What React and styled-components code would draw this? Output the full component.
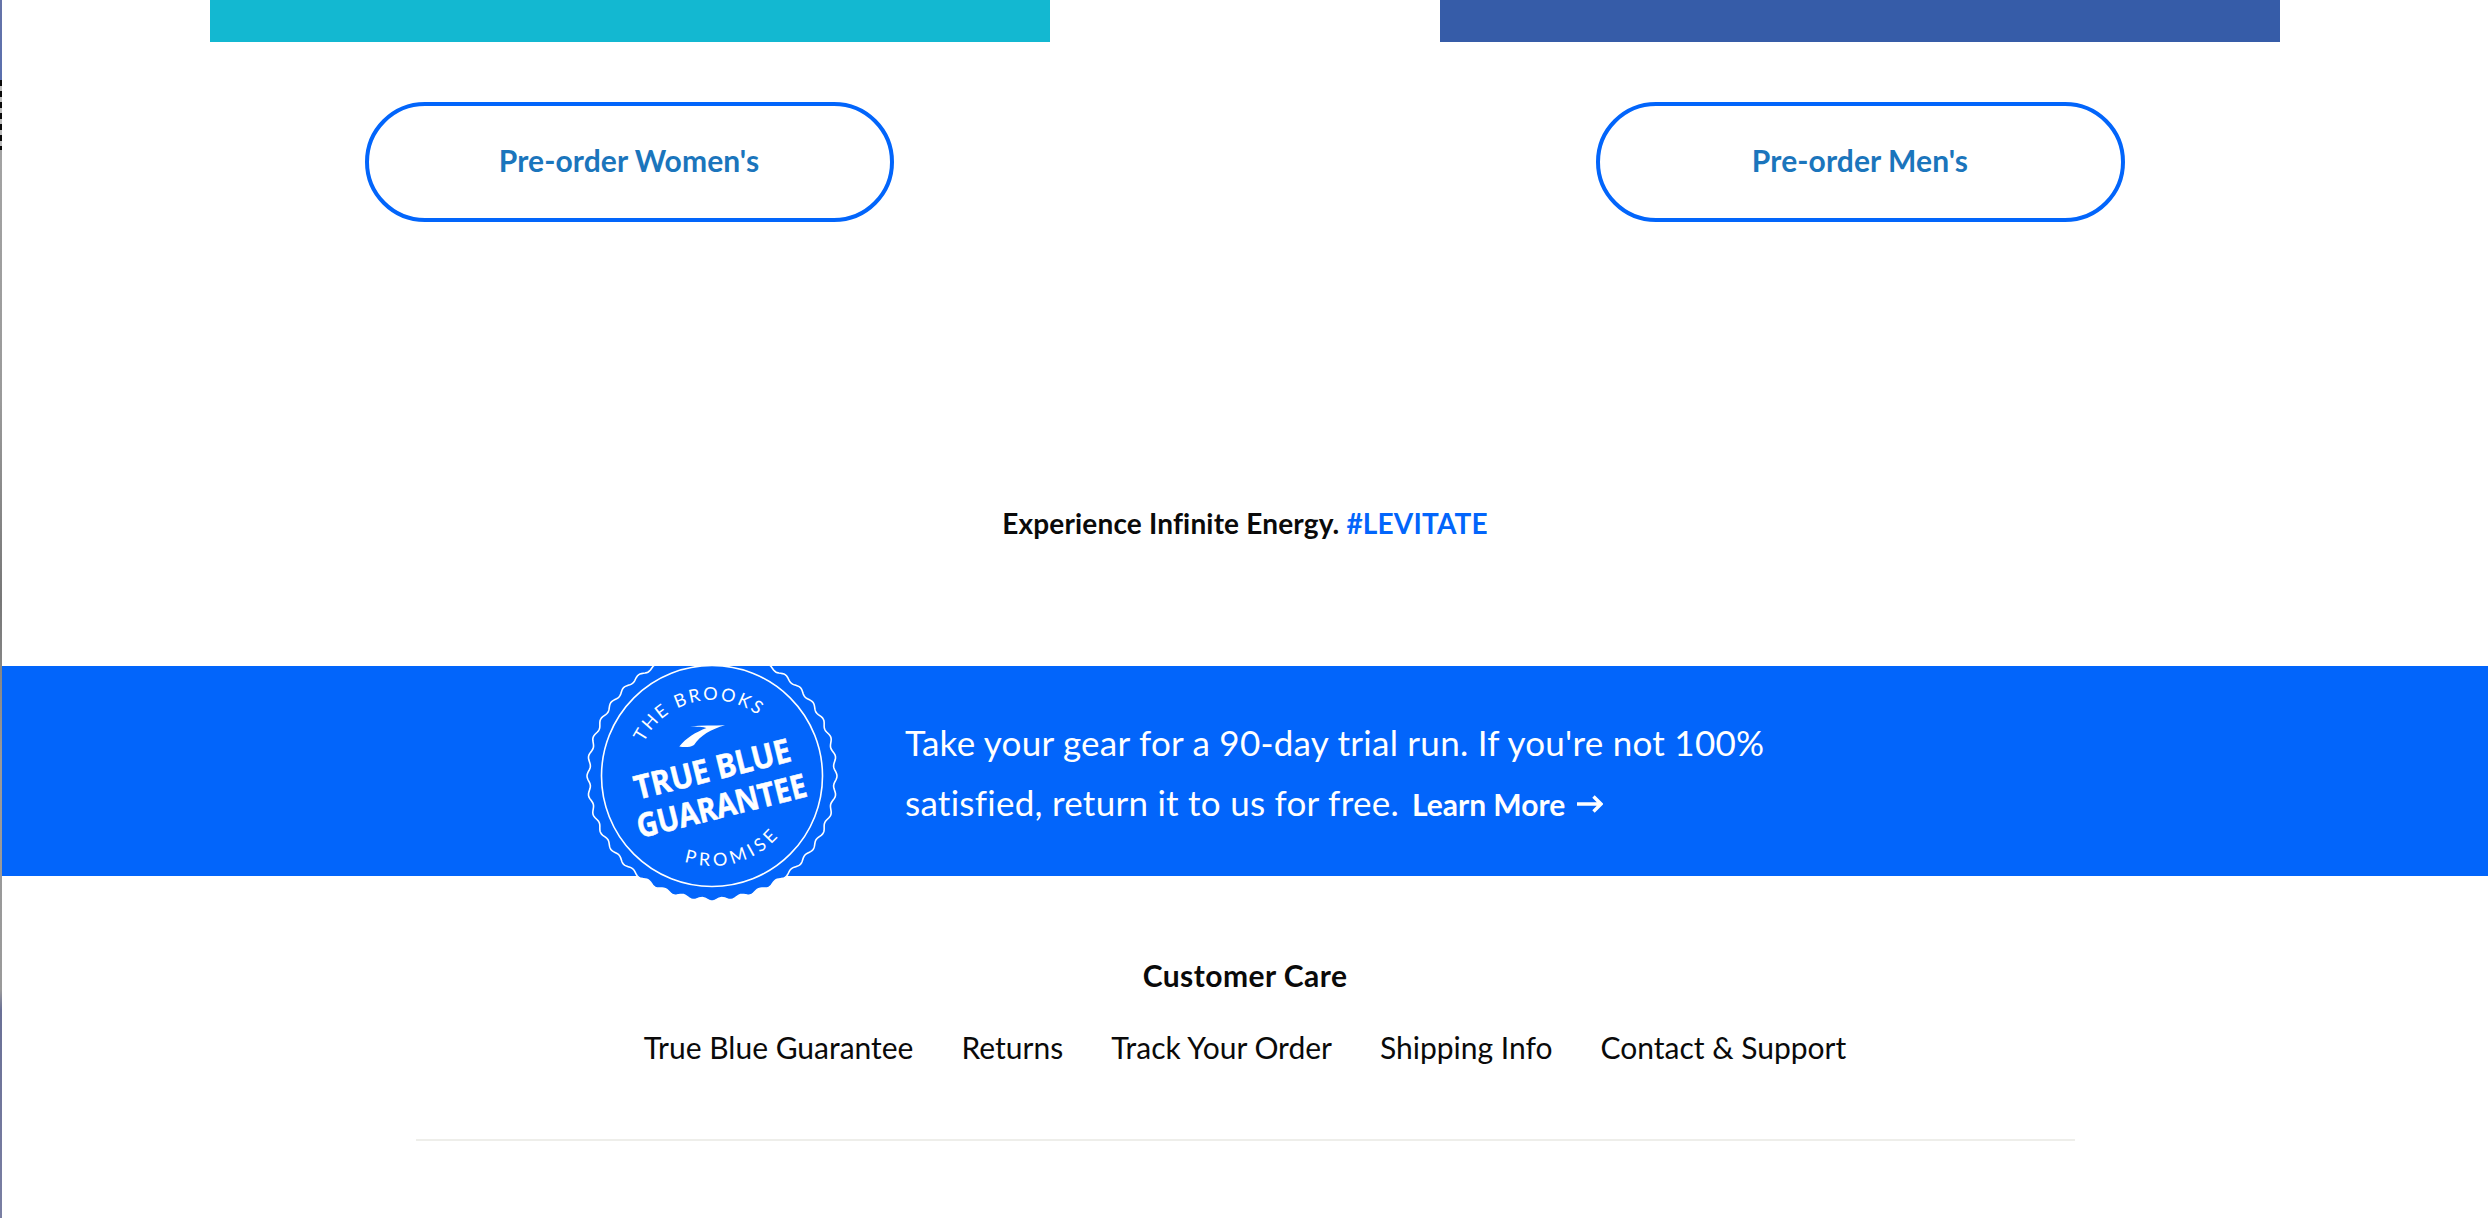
import React from "react";
import styled, { createGlobalStyle } from "styled-components";

const Global = createGlobalStyle`
  html, body { margin: 0; padding: 0; background: #fff; }
  body { font-family: Lato, "Open Sans", Arial, sans-serif; color: #0a0a0a; }
  a { text-decoration: none; color: inherit; }
`;

const Page = styled.div`
  display: flex;
  width: 2488px;
  height: 1218px;
  overflow: hidden;
`;

const Sliver = styled.div`
  flex: 0 0 2px;
  background:
    repeating-linear-gradient(to bottom, #0a0a0a 0 6px, #bdbdbd 6px 11px) 0 80px / 2px 70px no-repeat,
    linear-gradient(to bottom, #6674a8 0, #5a6fae 78px, #a3a3a3 150px, #9a9a9a 400px, #777 600px, #999 760px, #9a9a9a 990px, #6a7096 1010px, #7a7fa3 1218px);
`;

const Main = styled.main`
  flex: 1;
  min-width: 0;
`;

const Columns = styled.section`
  display: flex;
  gap: 390px;
  padding-left: 208px;
`;

const Column = styled.div`
  width: 840px;
  display: flex;
  flex-direction: column;
  align-items: center;
`;

const Swatch = styled.div`
  width: 100%;
  height: 42px;
  background: ${(p) => p.$color};
`;

const OutlineButton = styled.a`
  box-sizing: border-box;
  width: 529px;
  height: 120px;
  margin-top: 60px;
  margin-right: ${(p) => p.$nudge || 0}px;
  padding-bottom: 5px;
  display: flex;
  align-items: center;
  justify-content: center;
  border: 4px solid #0265fb;
  border-radius: 60px;
  color: #1b75bc;
  font-size: 30px;
  font-weight: 700;
  letter-spacing: 0.1px;
`;

const Tagline = styled.p`
  margin: 0;
  padding-top: 280px;
  height: 164px;
  line-height: 42px;
  text-align: center;
  font-size: 28px;
  font-weight: 700;
  letter-spacing: 0.17px;
`;

const Hashtag = styled.span`
  color: #0265fb;
`;

const Band = styled.section`
  position: relative;
  box-sizing: border-box;
  height: 210px;
  background: #0265fb;
  display: flex;
  align-items: center;
  padding: 4px 0 0 903px;
`;

const BadgeArt = styled.svg`
  position: absolute;
  left: 580px;
  top: 0;
  width: 260px;
  height: 240px;
`;

const BandText = styled.p`
  margin: 0;
  width: 900px;
  color: #fff;
  font-size: 35px;
  line-height: 60px;
  font-weight: 400;
  letter-spacing: 0.26px;
`;

const LearnMore = styled.a`
  display: inline-flex;
  align-items: center;
  gap: 12px;
  margin-left: 13px;
  font-size: 30px;
  font-weight: 700;
  letter-spacing: 0;
`;

const Care = styled.section`
  display: flex;
  flex-direction: column;
  align-items: center;
`;

const CareTitle = styled.h3`
  margin: 78px 0 0;
  font-size: 30px;
  line-height: 42px;
  font-weight: 700;
  letter-spacing: 0.45px;
`;

const CareLinks = styled.nav`
  display: flex;
  gap: 48px;
  margin-top: 30px;
`;

const CareLink = styled.a`
  font-size: 30px;
  line-height: 42px;
  font-weight: 400;
`;

const Divider = styled.hr`
  width: 1659px;
  height: 2px;
  margin: 71px 0 0;
  border: 0;
  background: #eeeeea;
`;

function scallop(cx, cy, r, amp, n) {
  const steps = n * 12;
  let d = "";
  for (let i = 0; i <= steps; i++) {
    const a = (i / steps) * Math.PI * 2;
    const rr = r + amp * Math.cos(a * n);
    d += `${i ? "L" : "M"}${(cx + rr * Math.cos(a)).toFixed(2)} ${(cy + rr * Math.sin(a)).toFixed(2)}`;
  }
  return d + "Z";
}

function polar(r, deg) {
  const a = (deg * Math.PI) / 180;
  return [130 + r * Math.cos(a), 130 + r * Math.sin(a)];
}

function Badge() {
  const [tx, ty] = polar(76, -154);
  const [tex, tey] = polar(76, -40);
  const [px, py] = polar(90, 108);
  const [pex, pey] = polar(90, 26);
  return (
    <BadgeArt viewBox="0 20 260 240" aria-label="The Brooks True Blue Guarantee Promise">
      <defs>
        <path id="arcTop" d={`M${tx} ${ty}A76 76 0 0 1 ${tex} ${tey}`} />
        <path id="arcBottom" d={`M${px} ${py}A90 90 0 0 0 ${pex} ${pey}`} />
      </defs>
      <path d={scallop(130, 130, 123.5, 1.5, 40)} fill="#0265fb" stroke="#fff" strokeWidth="1.6" />
      <circle cx="130" cy="130" r="110.5" fill="none" stroke="#fff" strokeWidth="1.6" />
      <text fill="#fff" fontFamily="Lato, sans-serif" fontSize="18" fontWeight="400" letterSpacing="2.3">
        <textPath href="#arcTop">THE BROOKS</textPath>
      </text>
      <text fill="#fff" fontFamily="Lato, sans-serif" fontSize="18" fontWeight="400" letterSpacing="4">
        <textPath href="#arcBottom">PROMISE</textPath>
      </text>
      <path
        d="M143 79.3C132 80 120 79 108 80.5C114 80.5 122 81 124.5 82C114 86 104 92 97.3 100.5C102 101.5 108 101.5 112 99C118 90 129 83 143 79.3Z"
        fill="#fff"
      />
      <g transform="rotate(-14 130 130)" fill="#fff" stroke="#fff" strokeWidth="0.5" fontFamily="'Noto Sans', sans-serif" fontWeight="700" fontSize="33" textAnchor="middle">
        <text x="132" y="135" textLength="160" lengthAdjust="spacingAndGlyphs">TRUE BLUE</text>
        <text x="132" y="173" textLength="174" lengthAdjust="spacingAndGlyphs">GUARANTEE</text>
      </g>
    </BadgeArt>
  );
}

const Arrow = () => (
  <svg width="26" height="18" viewBox="0 0 26 18" fill="none" stroke="#fff" strokeWidth="3.4">
    <path d="M0 9H24M16.5 1.5L24 9L16.5 16.5" />
  </svg>
);

const links = ["True Blue Guarantee", "Returns", "Track Your Order", "Shipping Info", "Contact & Support"];

export default function App() {
  return (
    <Page>
      <Global />
      <Sliver />
      <Main>
        <Columns>
          <Column>
            <Swatch $color="#13b8d1" />
            <OutlineButton $nudge={2}>Pre-order Women's</OutlineButton>
          </Column>
          <Column>
            <Swatch $color="#365ca8" />
            <OutlineButton>Pre-order Men's</OutlineButton>
          </Column>
        </Columns>
        <Tagline>
          Experience Infinite Energy. <Hashtag>#LEVITATE</Hashtag>
        </Tagline>
        <Band>
          <Badge />
          <BandText>
            Take your gear for a 90-day trial run. If you're not 100%
            <br />
            satisfied, return it to us for free.
            <LearnMore>
              Learn More <Arrow />
            </LearnMore>
          </BandText>
        </Band>
        <Care>
          <CareTitle>Customer Care</CareTitle>
          <CareLinks>
            {links.map((l) => (
              <CareLink key={l}>{l}</CareLink>
            ))}
          </CareLinks>
          <Divider />
        </Care>
      </Main>
    </Page>
  );
}
